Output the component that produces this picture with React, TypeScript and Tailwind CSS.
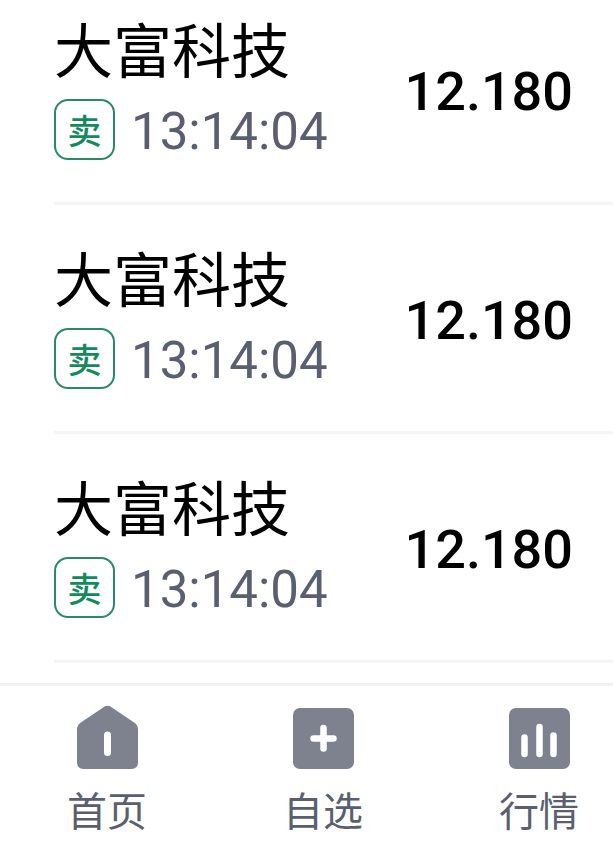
import type { ReactNode } from 'react';

interface Trade {
  id: number;
  name: string;
  side: string;
  time: string;
  price: string;
}

const TRADES: Trade[] = [
  { id: 1, name: '大富科技', side: '卖', time: '13:14:04', price: '12.180' },
  { id: 2, name: '大富科技', side: '卖', time: '13:14:04', price: '12.180' },
  { id: 3, name: '大富科技', side: '卖', time: '13:14:04', price: '12.180' },
];

function HomeIcon() {
  return (
    <svg viewBox="0 0 61 64" className="h-16 w-[61px]" aria-hidden="true">
      <path d="M26.500 2.200Q30.500-.6 34.500 2.200L57.500 17.800Q61 20.300 61 24.500V57.500Q61 64 54.500 64H6.500Q0 64 0 57.500V24.500Q0 20.300 3.500 17.800Z" fill="#7e828e" />
      <rect x="27" y="26.500" width="7" height="24.500" rx="3.500" fill="#fff" />
    </svg>
  );
}

function WatchIcon() {
  return (
    <svg viewBox="0 0 61 64" className="h-16 w-[61px]" aria-hidden="true">
      <rect y="3" width="61" height="61" rx="7" fill="#7e828e" />
      <path d="M30.500 23v20.500M20.500 33.500h20" stroke="#fff" strokeWidth="6.500" strokeLinecap="round" />
    </svg>
  );
}

function MarketIcon() {
  return (
    <svg viewBox="0 0 61 64" className="h-16 w-[61px]" aria-hidden="true">
      <rect y="3" width="61" height="61" rx="7" fill="#7e828e" />
      <path d="M15.500 32.500v16.500M30.500 22v27M44.500 30.500v18.500" stroke="#fff" strokeWidth="6.500" strokeLinecap="round" />
    </svg>
  );
}

const TABS: { label: string; icon: ReactNode }[] = [
  { label: '首页', icon: <HomeIcon /> },
  { label: '自选', icon: <WatchIcon /> },
  { label: '行情', icon: <MarketIcon /> },
];

function TradeRow({ trade }: { trade: Trade }) {
  return (
    <li className="flex items-center justify-between border-b-3 border-[#f5f5f7] pt-[43px] pr-10 pb-[42px] first:pt-[19px]">
      <div>
        <h2 className="text-[59px] leading-[68px] text-black">{trade.name}</h2>
        <div className="mt-3 flex items-center gap-4">
          <span className="flex size-[61px] items-center justify-center rounded-[14px] border-2 border-[#2a8a68] pt-1 text-[34px] leading-none font-medium text-[#148a5c]">
            {trade.side}
          </span>
          <time className="pt-1 text-[51px] leading-[57px] text-[#5a5f70]">{trade.time}</time>
        </div>
      </div>
      <span className="pt-1 text-[54px] leading-[64px] font-medium text-black">{trade.price}</span>
    </li>
  );
}

export default function App() {
  return (
    <div className="bg-white font-[Roboto,'Noto_Sans_CJK_SC',sans-serif]">
      <ul className="pl-[54px]">
        {TRADES.map((t) => <TradeRow key={t.id} trade={t} />)}
      </ul>

      <nav className="mt-5 flex justify-between border-t-3 border-[#f3f3f6] pt-[19px] pr-[34px] pb-2 pl-[67px]">
        {TABS.map((tab) => (
          <button key={tab.label} type="button" className="flex flex-col items-center gap-4">
            {tab.icon}
            <span className="text-[40px] leading-[56px] text-[#5a5f70]">{tab.label}</span>
          </button>
        ))}
      </nav>
    </div>
  );
}
